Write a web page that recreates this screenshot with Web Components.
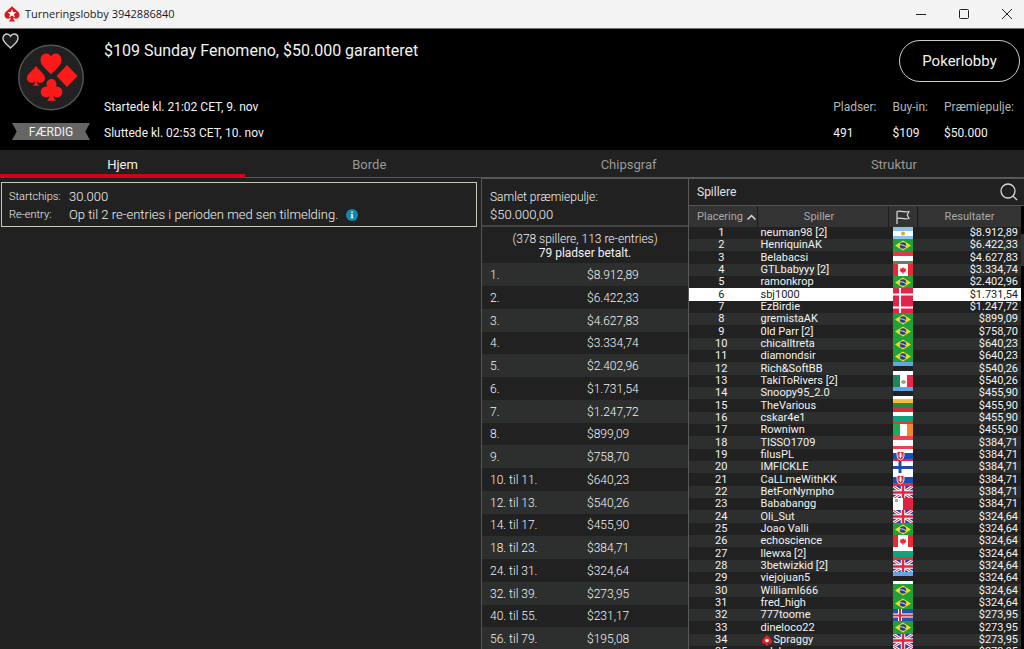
<!DOCTYPE html>
<html lang="da">
<head>
<meta charset="utf-8">
<title>Turneringslobby 3942886840</title>
<style>
html, body { height: 100%; margin: 0; background: #212121; overflow: hidden; }
body { font-family: Roboto, "Liberation Sans", sans-serif; color: #f2f2f2; }
</style>
</head>
<body>
<tournament-lobby></tournament-lobby>

<template id="t-lobby">
  <style>
    :host { display: flex; flex-direction: column; height: 100vh; --line: #585858; --stripe: #2c2f2e; --bg: #212121; }
    main { flex: 1; min-height: 0; display: grid; grid-template-columns: minmax(0, 1fr) 208px 335px; background: var(--bg); }
    main > * { min-height: 0; overflow: hidden; }
  </style>
  <window-bar>Turneringslobby 3942886840</window-bar>
  <lobby-header></lobby-header>
  <tab-bar></tab-bar>
  <main>
    <info-panel></info-panel>
    <prize-panel></prize-panel>
    <player-panel></player-panel>
  </main>
</template>

<template id="t-window">
  <style>
    :host { display: flex; align-items: center; gap: 13px; height: 29px; padding-right: 2px; background: #f3f3f3; color: #1a1a1a; border-bottom: 1px solid #777; box-sizing: border-box; }
    .title { flex: 1; display: flex; align-items: center; gap: 5px; padding-left: 4px; font: 11px/16px "Open Sans", "Noto Sans", sans-serif; }
    button { width: 30px; height: 26px; padding: 0; border: 0; background: none; display: grid; place-items: center; }
  </style>
  <span class="title"><svg width="16" height="16" viewBox="0 0 16 16"><path fill="#d71920" d="M8 0C6.500 3 .5 5 .5 9c0 2.200 1.600 3.700 3.600 3.700 1.200 0 2-.4 2.700-1.100C6.600 13.500 6 14.800 4.500 15.500h7c-1.500-.7-2.100-2-2.300-3.900.7.700 1.500 1.100 2.700 1.100 2 0 3.600-1.500 3.600-3.700C15.500 5 9.500 3 8 0z"/><path fill="#fff" d="M8 3.300l1.300 3h3.100l-2.500 2 1 3.100L8 9.600l-2.900 1.800 1-3.100-2.500-2h3.100z"/></svg><slot></slot></span>
  <button aria-label="Minimer"><svg width="10" height="10" stroke="#222" fill="none"><path d="M0 5.500h10"/></svg></button>
  <button aria-label="Maksimer"><svg width="10" height="10" stroke="#222" fill="none"><rect x=".5" y=".5" width="9" height="9" rx="1"/></svg></button>
  <button aria-label="Luk"><svg width="10" height="10" stroke="#222" fill="none"><path d="M0 0l10 10M10 0L0 10"/></svg></button>
</template>

<template id="t-header">
  <style>
    :host { display: grid; grid-template-columns: 104px minmax(0, 1fr) auto; height: 121px; background: #000; }
    .brand { display: flex; flex-direction: column; align-items: center; position: relative; padding: 15px 2px 0 0; box-sizing: border-box; gap: 12px; }
    .fav { position: absolute; left: 2px; top: 4px; width: 17px; height: 16px; padding: 0; border: 0; background: none; }
    .fav svg, .emblem { display: block; }
    .status { width: 78px; height: 17px; background: #666; color: #f0f0f0; font-size: 12px; line-height: 18px; text-align: center; clip-path: polygon(0 0, 100% 0, 94% 50%, 100% 100%, 0 100%, 6% 50%); }
    .info { display: flex; flex-direction: column; }
    h1 { margin: 12px 0 38px; font-size: 16px; line-height: 20px; font-weight: 400; }
    .info p { margin: 0; font-size: 12px; line-height: 16px; }
    .info p + p { margin-top: 10px; }
    .side { display: flex; flex-direction: column; align-items: flex-end; padding: 11px 4px 0 0; }
    .lobby { width: 121px; height: 42px; border: 1px solid #ccc; border-radius: 21px; background: #000; color: #f2f2f2; font: 15px Roboto, sans-serif; }
    dl { display: flex; gap: 16px; margin: 17px 6px 0 0; font-size: 12px; line-height: 16px; }
    dt { color: #b5b5b5; } dd { margin: 10px 0 0; }
  </style>
  <div class="brand">
    <button class="fav" aria-label="Favorit"><svg width="17" height="16" viewBox="0 0 17 16"><path fill="#1c1c1c" stroke="#ccc" stroke-width="1.400" d="M8.500 15C5 11.500 1 9 1 5.200 1 2.700 2.800 1 5 1c1.600 0 2.800.9 3.500 2.200C9.200 1.900 10.400 1 12 1c2.200 0 4 1.700 4 4.200 0 3.800-4 6.300-7.500 9.800z"/></svg></button>
    <svg class="emblem" width="66" height="67" viewBox="0 0 66 67"><circle cx="33" cy="33.500" r="32.300" fill="#212121" stroke="#555" stroke-width="1.400"/><g fill="#ff1a1a"><path d="M33 30.500C29.500 26 22.500 22 22.500 16c0-3.800 2.700-6.500 5.700-6.500 2.200 0 3.900 1.200 4.800 3.200.9-2 2.600-3.200 4.800-3.200 3 0 5.700 2.700 5.700 6.500 0 6-7 10-10.500 14.500z"/><path d="M49 21l10.500 11L49 43 38.500 32z"/><path d="M18 21.500c2 4.500 9 8 9 12.500 0 3-2.100 4.800-4.500 4.800-1.600 0-2.700-.6-3.700-1.600.2 2.300 1.200 4 3 4.600h-7.600c1.800-.6 2.800-2.300 3-4.600-1 1-2.100 1.600-3.700 1.600C11.100 38.800 9 37 9 34c0-4.500 7-8 9-12.500z"/><circle cx="33.500" cy="40" r="5"/><circle cx="28" cy="48" r="5.400"/><circle cx="39" cy="48" r="5.400"/><path d="M32 42h3c-.4 7 .2 12.500 3 14.700h-9c2.800-2.200 3.400-7.700 3-14.700z"/></g></svg>
    <div class="status">FÆRDIG</div>
  </div>
  <div class="info">
    <h1>$109 Sunday Fenomeno, $50.000 garanteret</h1>
    <p>Startede kl. 21:02 CET, 9. nov</p>
    <p>Sluttede kl. 02:53 CET, 10. nov</p>
  </div>
  <div class="side">
    <button class="lobby">Pokerlobby</button>
    <dl><div><dt>Pladser:</dt><dd>491</dd></div><div><dt>Buy-in:</dt><dd>$109</dd></div><div><dt>Præmiepulje:</dt><dd>$50.000</dd></div></dl>
  </div>
</template>

<template id="t-tabs">
  <style>
    :host { display: block; background: #212121; }
    nav { display: flex; height: 28px; border-bottom: 1px solid var(--line); box-sizing: border-box; }
    button { flex: 1 1 auto; padding: 2px 0 0; border: 0; background: none; font: 13px/25px Roboto, sans-serif; color: #999; }
    button[aria-selected=true] { color: #f2f2f2; border-bottom: 4px solid #d0021b; margin-bottom: -1px; padding-top: 6px; line-height: 18px; }
  </style>
  <nav role="tablist">
    <button role="tab" aria-selected="true">Hjem</button><button role="tab">Borde</button><button role="tab">Chipsgraf</button><button role="tab">Struktur</button>
  </nav>
</template>

<template id="t-info">
  <style>
    :host { display: block; padding: 4px 4px 0 1px; }
    dl { display: grid; grid-template-columns: 60px 1fr; margin: 0; padding: 5px 7px 2px; border: 1px solid #c8c8b8; font-size: 13px; line-height: 18px; font-weight: 300; }
    dt { font-size: 11px; }
    dd { margin: 0; display: flex; align-items: center; }
    svg { margin-left: 8px; }
  </style>
  <dl>
    <dt>Startchips:</dt><dd>30.000</dd>
    <dt>Re-entry:</dt><dd>Op til 2 re-entries i perioden med sen tilmelding.<svg width="12" height="12" viewBox="0 0 12 12"><circle cx="6" cy="6" r="6" fill="#118ab2"/><path fill="#fff" d="M5.300 2.500h1.500V4H5.300zM4.800 5h2v3.500h.7v.8H4.600v-.8h.7V5.800h-.5z"/></svg></dd>
  </dl>
</template>

<template id="t-prizes">
  <style>
    :host { display: block; border: solid var(--line); border-width: 1px 1px 0; font-weight: 300; font-size: 12px; }
    .total { padding: 10px 8px 2px; border-bottom: 2px solid #444; font-size: 13px; line-height: 17px; }
    .total span { display: block; font-size: 12px; }
    .places { margin: 0; padding: 5px 0 3px; text-align: center; line-height: 14px; }
    .places b { display: block; font-weight: 400; }
    table { width: 100%; border-collapse: collapse; table-layout: fixed; }
    tr { height: 23px; } tr:nth-child(4n) { height: 22px; }
    tr:nth-child(odd) { background: var(--stripe); }
    td { padding: 0; line-height: 20px; } td:first-child { width: 97px; padding-left: 8px; }
  </style>
  <div class="total"><span>Samlet præmiepulje:</span>$50.000,00</div>
  <p class="places">(378 spillere, 113 re-entries)<b>79 pladser betalt.</b></p>
  <table><tbody></tbody></table>
</template>

<template id="t-players">
  <style>
    :host { display: block; border-top: 1px solid var(--line); }
    .bar { display: flex; justify-content: space-between; align-items: center; height: 27px; padding: 0 6px 0 8px; font-size: 12px; border-bottom: 1px solid #555; box-sizing: border-box; color: #e2e2e2; }
    .bar button { padding: 0; border: 0; background: none; } .bar svg { display: block; }
    .body { display: flex; }
    table { flex: 1; border-collapse: collapse; table-layout: fixed; font-size: 11px; }
    th { height: 21px; padding: 0; background: #333; color: #aaa; font-weight: 400; border-left: 1px solid #1c1c1c; }
    th:first-child { border-left: 0; width: 61px; padding-left: 7px; } th:nth-child(2) { width: 122px; padding-right: 8px; } th:nth-child(3) { width: 28px; }
    th svg { vertical-align: middle; margin-left: 4px; } th:nth-child(3) svg { display: block; margin: auto; }
    tbody tr { height: 12px; } tbody tr:nth-child(3n) { height: 13px; }
    tbody tr:nth-child(even) { background: var(--stripe); }
    tbody tr.me { background: #fff; color: #222; }
    td { padding: 0; line-height: 12px; white-space: nowrap; }
    td:first-child { text-align: center; padding-right: 4px; }
    td:nth-child(2) { padding-left: 3px; }
    td:nth-child(4) { text-align: right; padding-right: 3px; }
    td svg { vertical-align: top; margin-right: 1px; }
    .track { width: 3px; background: #000; padding-top: 28px; } .thumb { height: 32px; background: #333; }
  </style>
  <div class="bar"><span>Spillere</span><button aria-label="Søg"><svg width="18" height="18" viewBox="0 0 18 18" fill="none" stroke="#d8d8d8" stroke-width="1.300"><circle cx="8" cy="8" r="7"/><path d="M13 13l4 4"/></svg></button></div>
  <div class="body">
    <table>
      <thead><tr><th>Placering<svg width="9" height="6" fill="none" stroke="#ddd" stroke-width="1.500"><path d="M.5 5.500l4-4 4 4"/></svg></th><th>Spiller</th><th aria-label="Land"><svg width="14" height="14" viewBox="0 0 14 14" fill="none" stroke="#d8d8d8" stroke-width="1.200"><path d="M1 14V1.500c3-1.500 5 1.300 12 0l-1.800 3.500L13 8.500c-6 1.300-8.500-1.300-12 0"/></svg></th><th>Resultater</th></tr></thead>
      <tbody></tbody>
    </table>
    <div class="track"><div class="thumb"></div></div>
  </div>
</template>

<script>
const base = (name, id, setup) => customElements.define(name, class extends HTMLElement {
  constructor() {
    super();
    this.attachShadow({ mode: "open" }).append(document.getElementById(id).content.cloneNode(true));
    if (setup) setup(this.shadowRoot);
  }
});

const bands = (...list) => list.map(([c, y, h]) => `<rect y="${y}" width="20" height="${h}" fill="${c}"/>`).join("");
const FLAGS = {
  ar: bands(["#8cc3ee",0,4],["#fff",4,5],["#8cc3ee",9,5]) + '<circle cx="10" cy="6.500" r="2" fill="#e9a22c"/>',
  br: '<rect width="20" height="14" fill="#1fa038"/><path d="M10 1.500l8 5-8 5-8-5z" fill="#f7dc1e"/><circle cx="10" cy="6.500" r="3.200" fill="#1f3f94"/><path d="M7 5.800q3-.4 6 1.800" stroke="#fff" fill="none" stroke-width=".8"/>',
  hu: bands(["#dd3a4c",0,5],["#fff",5,5],["#4f8a5c",10,4]),
  ca: '<rect width="20" height="14" fill="#fff"/><path d="M0 0h5v14H0zM15 0h5v14h-5z" fill="#ea2a33"/><path d="M10 3l1 1.500 2-.3-.4 1.500.9.6-2 2.200H10.400v1.500h-.8V8.500H8.500l-2-2.200.9-.6L7 4.200l2 .3z" fill="#ea2a33"/>',
  dk: '<rect width="20" height="14" fill="#e4234a"/><path d="M6 0h2v14H6zM0 5.500h20v2H0z" fill="#fff"/>',
  ee: bands(["#5fa5ea",0,4],["#222",4,5],["#fff",9,5]),
  mx: '<rect width="20" height="14" fill="#fff"/><path d="M0 0h7v14H0z" fill="#1f8757"/><path d="M14 0h6v14h-6z" fill="#e62a45"/><path d="M8 8q0-3 2.500-3T13 8l-2.500 1z" fill="#b19c72"/>',
  lt: bands(["#f6bd3c",0,4],["#1f8a44",4,5],["#d8313b",9,5]),
  bg: bands(["#fff",0,4],["#0ea37c",4,6],["#e23a2a",10,4]),
  ie: '<rect width="20" height="14" fill="#fff"/><path d="M0 0h7v14H0z" fill="#1fab55"/><path d="M14 0h6v14h-6z" fill="#ee8a2b"/>',
  at: bands(["#ea4250",0,4],["#fff",4,6],["#ea4250",10,4]),
  sk: bands(["#fff",0,4],["#1c4fb4",4,6],["#e7293f",10,4]) + '<path d="M4 2.500h7v4.500q0 3-3.500 4Q4 10 4 7z" fill="#e7293f" stroke="#fff" stroke-width=".8"/><path d="M7.500 3.500v5.500M6 5h3M5.500 7h4" stroke="#fff"/>',
  fi: '<rect width="20" height="14" fill="#fff"/><path d="M5.500 0h3v14h-3zM0 5h20v3H0z" fill="#1c4fa4"/>',
  gb: '<rect width="20" height="14" fill="#2a3d9a"/><path d="M0 0l20 13M20 0L0 13" stroke="#fff" stroke-width="3"/><path d="M0 0l20 13M20 0L0 13" stroke="#e4233f"/><path d="M10 0v14M0 6.500h20" stroke="#fff" stroke-width="4.500"/><path d="M10 0v14M0 6.500h20" stroke="#e4233f" stroke-width="2.500"/>',
  mt: '<rect width="20" height="14" fill="#fff"/><path d="M10 0h10v14H10z" fill="#dc2340"/><path d="M2 1h3v3H2z" fill="#aaa"/>',
  is: '<rect width="20" height="14" fill="#1e55b0"/><path d="M5 0h4v14H5zM0 4.500h20v4H0z" fill="#fff"/><path d="M6 0h2v14H6zM0 5.500h20v2H0z" fill="#e4233f"/>'
};

customElements.define("country-flag", class extends HTMLElement {
  constructor() { super(); this.attachShadow({ mode: "open" }); }
  connectedCallback() {
    this.shadowRoot.innerHTML = `<style>:host{display:block;height:12px;width:20px;margin:0 auto;overflow:hidden}svg{display:block}:host([tall]){height:13px}</style><svg width="20" height="14" viewBox="0 0 20 14">${FLAGS[this.getAttribute("code")]}</svg>`;
  }
});

base("window-bar", "t-window");
base("lobby-header", "t-header");
base("tab-bar", "t-tabs");
base("info-panel", "t-info");

const PRIZES = [["1.","8.912,89"],["2.","6.422,33"],["3.","4.627,83"],["4.","3.334,74"],["5.","2.402,96"],["6.","1.731,54"],["7.","1.247,72"],["8.","899,09"],["9.","758,70"],["10. til 11.","640,23"],["12. til 13.","540,26"],["14. til 17.","455,90"],["18. til 23.","384,71"],["24. til 31.","324,64"],["32. til 39.","273,95"],["40. til 55.","231,17"],["56. til 79.","195,08"]];
base("prize-panel", "t-prizes", root => {
  root.querySelector("tbody").innerHTML = PRIZES.map(([p, v]) => `<tr><td>${p}</td><td>$${v}</td></tr>`).join("");
});

const PLAYERS = `neuman98 [2]|ar|8.912,89
HenriquinAK|br|6.422,33
Belabacsi|hu|4.627,83
GTLbabyyy [2]|ca|3.334,74
ramonkrop|br|2.402,96
sbj1000|dk|1.731,54
EzBirdie|dk|1.247,72
gremistaAK|br|899,09
0ld Parr [2]|br|758,70
chicalltreta|br|640,23
diamondsir|br|640,23
Rich&amp;SoftBB|ee|540,26
TakiToRivers [2]|mx|540,26
Snoopy95_2.0|ee|455,90
TheVarious|lt|455,90
cskar4e1|bg|455,90
Rowniwn|ie|455,90
TISSO1709|at|384,71
filusPL|sk|384,71
IMFICKLE|fi|384,71
CaLLmeWithKK|sk|384,71
BetForNympho|gb|384,71
Bababangg|mt|384,71
Oli_Sut|gb|324,64
Joao Valli|br|324,64
echoscience|ca|324,64
llewxa [2]|bg|324,64
3betwizkid [2]|gb|324,64
viejojuan5|ee|324,64
WilliamI666|br|324,64
fred_high|br|324,64
777toome|is|273,95
dineloco22|br|273,95
Spraggy|gb|273,95
adel|gb|273,95`.split("\n").map(l => l.split("|"));
const SPADE = '<svg width="12" height="12" viewBox="0 0 12 12"><path fill="#e3202a" d="M6 .5C5 3 1 4.500 1 7.500 1 9.200 2.300 10 3.500 10c.6 0 1-.1 1.500-.4l-.5 2h3l-.5-2c.5.3.9.4 1.500.4C9.700 10 11 9.200 11 7.500 11 4.500 7 3 6 .5z"/><circle cx="6" cy="6.500" r="1.800" fill="#fff"/></svg>';
base("player-panel", "t-players", root => {
  root.querySelector("tbody").innerHTML = PLAYERS.map(([n, f, v], i) =>
    `<tr${n === "sbj1000" ? ' class="me"' : ""}><td>${i + 1}</td><td>${n === "Spraggy" ? SPADE : ""}${n}</td><td><country-flag code="${f}"${i % 3 === 2 ? " tall" : ""}></country-flag></td><td>$${v}</td></tr>`).join("");
});
base("tournament-lobby", "t-lobby");
</script>
</body>
</html>
